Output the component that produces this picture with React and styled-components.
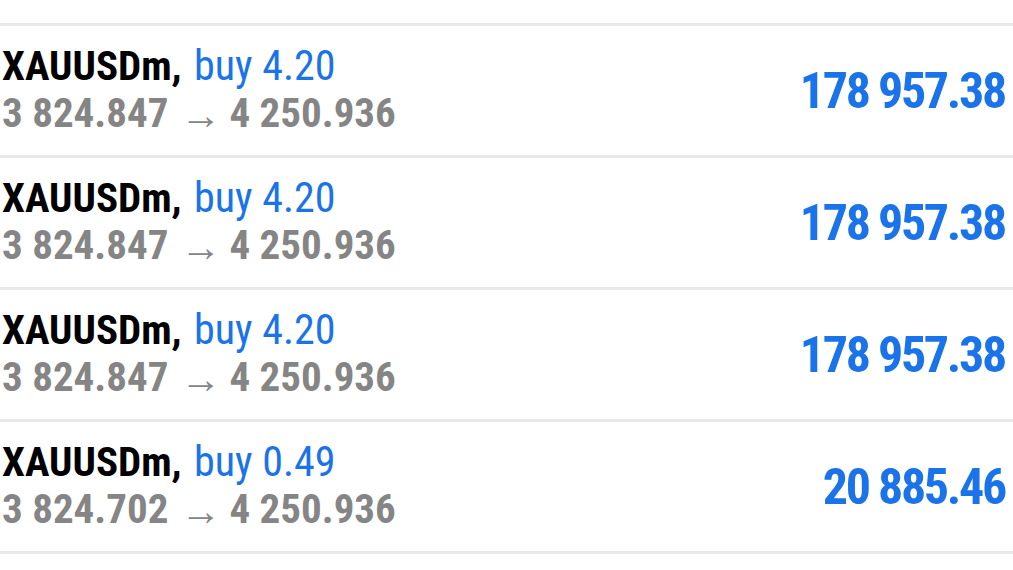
import React from "react";
import styled, { createGlobalStyle } from "styled-components";

const GlobalStyle = createGlobalStyle`
  body {
    margin: 0;
    background: #ffffff;
    font-family: "Roboto Condensed", Roboto, sans-serif;
    font-stretch: condensed;
  }
`;

const List = styled.div`
  padding-top: 23px;
  width: 1013px;
`;

const Row = styled.div`
  display: flex;
  align-items: center;
  justify-content: space-between;
  height: 129px;
  border-top: 3px solid #e9e9e9;
  padding: 0 8px 0 2px;
  &:last-child {
    border-bottom: 3px solid #e9e9e9;
  }
`;

const Info = styled.div`
  display: flex;
  flex-direction: column;
  font-size: 41px;
  line-height: 47px;
`;

const Title = styled.div`
  color: #000;
  font-weight: 700;
`;

const Side = styled.span`
  color: #1a73e8;
  font-weight: 400;
  font-size: 42px;
  margin-left: 3px;
`;

const Prices = styled.div`
  color: #858585;
  font-weight: 700;
`;

const Arrow = styled.span`
  font-weight: 700;
  margin: 0 8px 0 12px;
  vertical-align: -2px;
`;

const Profit = styled.div`
  color: #1a73e8;
  font-weight: 700;
  font-size: 50px;
  letter-spacing: -2.3px;
`;

const trades = [
  { symbol: "XAUUSDm", side: "buy", volume: "4.20", open: "3 824.847", close: "4 250.936", profit: "178 957.38" },
  { symbol: "XAUUSDm", side: "buy", volume: "4.20", open: "3 824.847", close: "4 250.936", profit: "178 957.38" },
  { symbol: "XAUUSDm", side: "buy", volume: "4.20", open: "3 824.847", close: "4 250.936", profit: "178 957.38" },
  { symbol: "XAUUSDm", side: "buy", volume: "0.49", open: "3 824.702", close: "4 250.936", profit: "20 885.46" },
];

export default function App() {
  return (
    <>
      <GlobalStyle />
      <List>
        {trades.map((t, i) => (
          <Row key={i}>
            <Info>
              <Title>
                {t.symbol}, <Side>{t.side} {t.volume}</Side>
              </Title>
              <Prices>
                {t.open}<Arrow>→</Arrow>{t.close}
              </Prices>
            </Info>
            <Profit>{t.profit}</Profit>
          </Row>
        ))}
      </List>
    </>
  );
}
